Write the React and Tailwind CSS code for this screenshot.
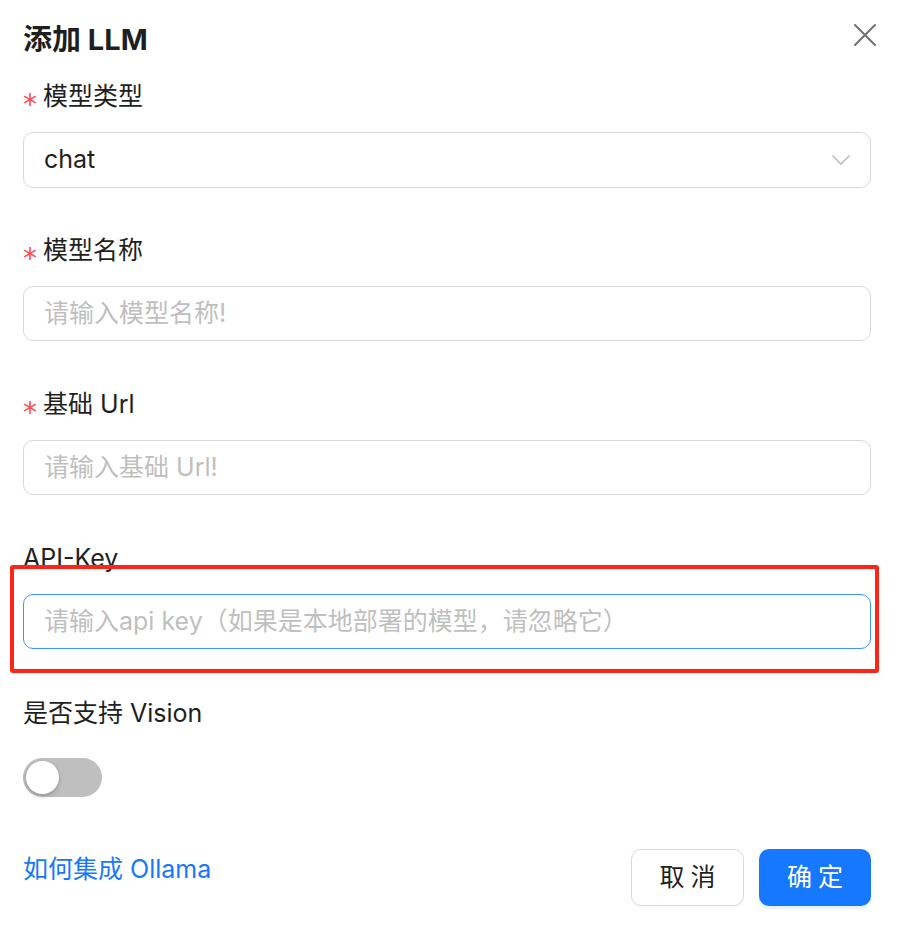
import React, { useState } from 'react';

const FONT = "font-['Inter','Noto_Sans_CJK_SC',sans-serif]";

const Label = ({ required, children }) => (
  <div className="flex items-center h-[34px] mb-[19px] text-[25px] text-[#1f1f1f] leading-[34px]">
    {required && (
      <span className="text-[#ff4d4f] text-[28px] leading-none w-[20px] ml-[0px] translate-y-[9px] font-['DejaVu_Sans',sans-serif]">
        *
      </span>
    )}
    {children}
  </div>
);

const TextInput = ({ placeholder, active }) => (
  <div
    className={`h-[55px] rounded-[10px] border flex items-center px-[20px] text-[25px] text-[#bfbfbf] ${
      active ? 'border-[#4096ff]' : 'border-[#d9d9d9]'
    }`}
  >
    {placeholder}
  </div>
);

export default function App() {
  const [vision, setVision] = useState(false);

  return (
    <div className={`relative min-h-screen w-full bg-white ${FONT}`}>
      <div className="pl-[23px] pr-[35px] pt-[21px]">
        {/* Header */}
        <div className="flex items-start justify-between">
          <h1 className="text-[29px] font-bold leading-[38px] text-[#1f1f1f]">添加 LLM</h1>
          <button className="mt-[1px] mr-[-7px] text-[#707070]">
            <svg width="26" height="26" viewBox="0 0 26 26" fill="none" stroke="currentColor" strokeWidth="2" strokeLinecap="round">
              <path d="M3 3 L23 23 M23 3 L3 23" />
            </svg>
          </button>
        </div>

        {/* Form */}
        <div className="mt-[20px]">
          <Label required>模型类型</Label>
          <div className="h-[56px] rounded-[10px] border border-[#d9d9d9] flex items-center justify-between pl-[20px] pr-[19px] text-[25px] text-[#1f1f1f]">
            <span>chat</span>
            <svg width="20" height="12" viewBox="0 0 20 12" fill="none" stroke="#bfbfbf" strokeWidth="1.6">
              <path d="M1.5 1.5 L10 10 L18.5 1.5" />
            </svg>
          </div>

          <div className="mt-[45px]">
            <Label required>模型名称</Label>
            <TextInput placeholder="请输入模型名称!" />
          </div>

          <div className="mt-[46px]">
            <Label required>基础 Url</Label>
            <TextInput placeholder="请输入基础 Url!" />
          </div>

          <div className="mt-[46px]">
            <Label>API-Key</Label>
            <TextInput placeholder="请输入api key（如果是本地部署的模型，请忽略它）" active />
          </div>

          <div className="mt-[47px]">
            <div className="h-[34px] leading-[34px] text-[25px] text-[#1f1f1f]">是否支持 Vision</div>
            <button
              onClick={() => setVision(!vision)}
              className={`mt-[28px] w-[79px] h-[39px] rounded-full flex items-center px-[3px] ${
                vision ? 'bg-[#1677ff] justify-end' : 'bg-[#bfbfbf] justify-start'
              }`}
            >
              <span className="w-[33px] h-[33px] rounded-full bg-white shadow-[0_2px_4px_rgba(0,35,11,0.25)]" />
            </button>
          </div>
        </div>

        {/* Footer */}
        <div className="mt-[52px] flex items-center justify-between">
          <a className="text-[25px] text-[#1677ff] leading-[34px] -mt-[18px]">如何集成 Ollama</a>
          <div className="flex gap-[15px]">
            <button className="w-[113px] h-[57px] rounded-[10px] border border-[#d9d9d9] bg-white text-[25px] text-[#1f1f1f] tracking-[6px] pl-[6px] shadow-[0_2px_0_rgba(0,0,0,0.02)]">
              取消
            </button>
            <button className="w-[112px] h-[57px] rounded-[10px] bg-[#1677ff] text-[25px] text-white tracking-[6px] pl-[6px] shadow-[0_3px_0_rgba(5,145,255,0.1)]">
              确定
            </button>
          </div>
        </div>
      </div>

      {/* annotation highlight */}
      <div className="absolute left-[10px] top-[565px] w-[869px] h-[108px] border-[4px] border-[#ff2418] rounded-[3px] pointer-events-none" />
    </div>
  );
}
